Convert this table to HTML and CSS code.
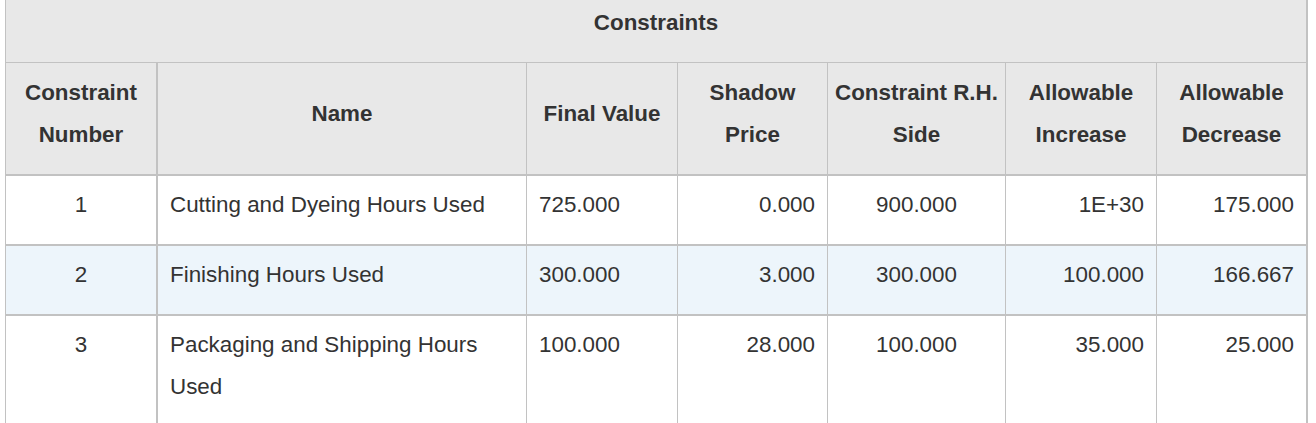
FILE: index.html
```html
<!DOCTYPE html>
<html>
<head>
<meta charset="utf-8">
<link rel="stylesheet" href="styles.css">
</head>
<body>
<div class="report">
  <div class="title">Constraints</div>
  <div class="row head">
    <div class="cell c1">Constraint Number</div>
    <div class="cell">Name</div>
    <div class="cell">Final Value</div>
    <div class="cell">Shadow Price</div>
    <div class="cell">Constraint R.H. Side</div>
    <div class="cell">Allowable Increase</div>
    <div class="cell last">Allowable Decrease</div>
  </div>
  <div class="row">
    <div class="cell c1 center">1</div>
    <div class="cell">Cutting and Dyeing Hours Used</div>
    <div class="cell">725.000</div>
    <div class="cell right">0.000</div>
    <div class="cell center">900.000</div>
    <div class="cell right">1E+30</div>
    <div class="cell right last">175.000</div>
  </div>
  <div class="row alt">
    <div class="cell c1 center">2</div>
    <div class="cell">Finishing Hours Used</div>
    <div class="cell">300.000</div>
    <div class="cell right">3.000</div>
    <div class="cell center">300.000</div>
    <div class="cell right">100.000</div>
    <div class="cell right last">166.667</div>
  </div>
  <div class="row">
    <div class="cell c1 center">3</div>
    <div class="cell">Packaging and Shipping Hours Used</div>
    <div class="cell">100.000</div>
    <div class="cell right">28.000</div>
    <div class="cell center">100.000</div>
    <div class="cell right">35.000</div>
    <div class="cell right last">25.000</div>
  </div>
</div>
</body>
</html>
```

FILE: styles.css
```css
html, body {
  margin: 0;
  padding: 0;
  background: #ffffff;
}
body {
  font-family: "Liberation Sans", Arial, sans-serif;
  font-size: 22.4px;
  line-height: 42px;
  color: #333333;
  overflow: hidden;
}
.report {
  margin-left: 5px;
  width: 1303px;
  box-sizing: border-box;
  border-left: 1px solid #c2c2c2;
  border-right: 2px solid #c2c2c2;
}
.title {
  background: #e8e8e8;
  font-weight: bold;
  text-align: center;
  padding: 2px 0 18px;
  border-bottom: 1px solid #c2c2c2;
}
.row {
  display: grid;
  grid-template-columns: 152px 369px 151px 150px 178px 151px 149px;
  border-bottom: 2px solid #c2c2c2;
}
.row.alt {
  background: #edf5fb;
}
.cell {
  box-sizing: border-box;
  border-right: 1px solid #c2c2c2;
  padding: 8px 12px 18px;
}
.cell.c1 {
  border-right-width: 2px;
}
.cell.last {
  border-right: none;
}
.center {
  text-align: center;
}
.right {
  text-align: right;
}
.head {
  background: #e8e8e8;
  font-weight: bold;
}
.head .cell {
  padding: 9px 6px 18px;
  text-align: center;
  display: flex;
  align-items: center;
  justify-content: center;
}
```
